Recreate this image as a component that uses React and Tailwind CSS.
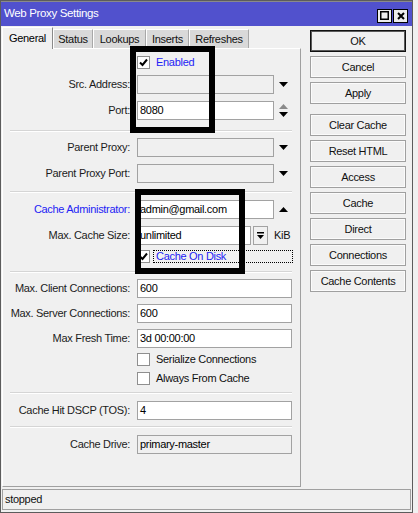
import React from "react";

const Down = () => (
  <svg width="9" height="5" viewBox="0 0 9 5"><polygon points="0,0 9,0 4.5,5" fill="#000" /></svg>
);
const Up = ({ color = "#000" }) => (
  <svg width="9" height="5" viewBox="0 0 9 5"><polygon points="0,5 9,5 4.5,0" fill={color} /></svg>
);

const Check = () => (
  <svg width="11" height="11" viewBox="0 0 11 11">
    <path d="M2 5.5 L4.5 8 L9 2.5" fill="none" stroke="#000" strokeWidth="2" />
  </svg>
);

function Box({ checked }) {
  return (
    <div className="w-[13px] h-[13px] bg-white border border-[#8f8f8f] flex items-center justify-center">
      {checked && <Check />}
    </div>
  );
}

function Field({ value = "", disabled = false, w = "w-[137px]" }) {
  return (
    <div
      className={`${w} h-[19px] border border-[#a2a2a2] flex items-center pl-[2px] text-black ${
        disabled ? "bg-[#f0f0f0]" : "bg-white"
      }`}
    >
      {value}
    </div>
  );
}

function Row({ label, blue, className = "", children }) {
  return (
    <div className={`flex items-center h-[19px] ${className}`}>
      <div className={`w-[127px] text-right whitespace-nowrap ${blue ? "text-[#2323f5]" : "text-[#1c1c1c]"}`}>
        {label}:
      </div>
      <div className="ml-[7px] flex items-center">{children}</div>
    </div>
  );
}

function Sep({ className = "" }) {
  return <div className={`ml-[7px] w-[282px] border-t border-[#d5d5d5] border-b border-b-white ${className}`} />;
}

function Arrow({ children }) {
  return <div className="w-[18px] flex flex-col items-center justify-center gap-[3px]">{children}</div>;
}

function Btn({ children, def, className = "" }) {
  return (
    <div
      className={`w-[96px] h-[22px] flex items-center justify-center bg-[#f0f0f0] text-[#111] ${
        def ? "border border-[#111] shadow-[inset_0_0_0_1px_#5a5a5a]" : "border border-[#a0a0a0] shadow-[inset_0_0_0_1px_#fbfbfb]"
      } ${className}`}
    >
      {children}
    </div>
  );
}

const tabs = ["Status", "Lookups", "Inserts", "Refreshes"];
const tabW = ["w-[40px]", "w-[53px]", "w-[43px]", "w-[60px]"];

export default function App() {
  return (
    <div className="relative w-[418px] h-[513px] bg-[#f0f0f0] overflow-hidden font-['Liberation_Sans',Arial,sans-serif] text-[11px] tracking-[-0.3px] leading-none">
      <div className="w-[413px] h-[513px] border border-[#5c5c5c] flex flex-col">
        {/* title bar */}
        <div className="h-[25px] bg-[#5151cd] flex items-center justify-between pl-[3px] pr-[4px] border-t border-[#8a8a8a]">
          <span className="text-white text-[11.5px] tracking-[-0.35px]">Web Proxy Settings</span>
          <div className="flex gap-[1px] mt-[3px]">
            <div className="w-[15px] h-[14px] bg-[#ececec] border border-black flex items-center justify-center">
              <svg width="9" height="9" viewBox="0 0 9 9">
                <rect x="0.75" y="0.75" width="7.5" height="7.5" fill="none" stroke="#000" strokeWidth="1.5" />
              </svg>
            </div>
            <div className="w-[15px] h-[14px] bg-[#ececec] border border-black flex items-center justify-center">
              <svg width="8" height="8" viewBox="0 0 8 8">
                <path d="M1 1 L7 7 M7 1 L1 7" stroke="#000" strokeWidth="2" />
              </svg>
            </div>
          </div>
        </div>

        <div className="flex-1 flex flex-col">
          <div className="flex h-[461px]">
            {/* left pane: tabs + panel */}
            <div className="ml-[1px] w-[299px] flex flex-col">
              <div className="flex h-[22px] items-end">
                <div className="w-[51px] h-[22px] bg-[#f0f0f0] border-t border-l border-white border-r border-r-[#8a8a8a] flex items-center justify-center text-black relative z-10 -mb-[1px]">
                  General
                </div>
                {tabs.map((t, i) => (
                  <div
                    key={t}
                    className={`${tabW[i]} h-[19px] bg-[#d9d9d9] border-t border-l border-white border-r border-r-[#a8a8a8] flex items-center justify-center text-[#111]`}
                  >
                    {t}
                  </div>
                ))}
              </div>
              <div className="flex-1 border-t border-l border-white border-r border-b border-r-[#a0a0a0] border-b-[#a0a0a0] flex flex-col">
                <div className="flex items-center h-[13px] mt-[7px] ml-[134px]">
                  <Box checked />
                  <span className="ml-[6px] text-[#2323f5]">Enabled</span>
                </div>
                <Row label="Src. Address" className="mt-[6px]">
                  <Field disabled />
                  <Arrow><Down /></Arrow>
                </Row>
                <Row label="Port" className="mt-[7px]">
                  <Field value="8080" />
                  <Arrow>
                    <Up color="#8a8a8a" />
                    <Down />
                  </Arrow>
                </Row>
                <Sep className="mt-[10px]" />
                <Row label="Parent Proxy" className="mt-[6px]">
                  <Field disabled />
                  <Arrow><Down /></Arrow>
                </Row>
                <Row label="Parent Proxy Port" className="mt-[7px]">
                  <Field disabled />
                  <Arrow><Down /></Arrow>
                </Row>
                <Sep className="mt-[8px]" />
                <Row label="Cache Administrator" blue className="mt-[7px]">
                  <Field value="admin@gmail.com" />
                  <Arrow><Up /></Arrow>
                </Row>
                <Row label="Max. Cache Size" className="mt-[7px]">
                  <Field value="unlimited" w="w-[114px]" />
                  <div className="ml-[2px] w-[15px] h-[19px] border border-[#a2a2a2] bg-[#f0f0f0] flex items-center justify-center">
                    <svg width="9" height="9" viewBox="0 0 9 9">
                      <rect x="1" y="1" width="7" height="1.5" fill="#000" />
                      <polygon points="1,4 8,4 4.5,8" fill="#000" />
                    </svg>
                  </div>
                  <span className="ml-[6px] text-[#111]">KiB</span>
                </Row>
                <div className="flex items-center h-[13px] mt-[5px] ml-[134px]">
                  <Box checked />
                  <span className="ml-[3px] w-[140px] h-[13px] border border-dotted border-black flex items-center pl-[2px] text-[#2323f5]">
                    Cache On Disk
                  </span>
                </div>
                <Sep className="mt-[8px]" />
                <Row label="Max. Client Connections" className="mt-[6px]">
                  <Field value="600" w="w-[155px]" />
                </Row>
                <Row label="Max. Server Connections" className="mt-[6px]">
                  <Field value="600" w="w-[155px]" />
                </Row>
                <Row label="Max Fresh Time" className="mt-[6px]">
                  <Field value="3d 00:00:00" w="w-[155px]" />
                </Row>
                <div className="flex items-center h-[13px] mt-[5px] ml-[134px]">
                  <Box />
                  <span className="ml-[6px] text-[#111]">Serialize Connections</span>
                </div>
                <div className="flex items-center h-[13px] mt-[6px] ml-[134px]">
                  <Box />
                  <span className="ml-[6px] text-[#111]">Always From Cache</span>
                </div>
                <Sep className="mt-[7px]" />
                <Row label="Cache Hit DSCP (TOS)" className="mt-[7px]">
                  <Field value="4" w="w-[155px]" />
                </Row>
                <Sep className="mt-[6px]" />
                <Row label="Cache Drive" className="mt-[7px]">
                  <Field value="primary-master" disabled w="w-[155px]" />
                </Row>
              </div>
            </div>

            {/* action buttons */}
            <div className="ml-[9px] mt-[4px] flex flex-col gap-[4px]">
              <Btn def>OK</Btn>
              <Btn>Cancel</Btn>
              <Btn>Apply</Btn>
              <Btn className="mt-[6px]">Clear Cache</Btn>
              <Btn>Reset HTML</Btn>
              <Btn>Access</Btn>
              <Btn>Cache</Btn>
              <Btn>Direct</Btn>
              <Btn>Connections</Btn>
              <Btn>Cache Contents</Btn>
            </div>
          </div>

          {/* status bar */}
          <div className="mt-[2px] mx-[1px] h-[21px] border border-[#a0a0a0] flex items-center pl-[2px] text-[#111]">
            stopped
          </div>
        </div>
      </div>

      {/* highlight frames drawn over the form */}
      <div className="absolute left-[130px] top-[46px] w-[85px] h-[87px] border-[6px] border-black pointer-events-none" />
      <div className="absolute left-[135px] top-[189px] w-[110px] h-[85px] border-[6px] border-black pointer-events-none" />
    </div>
  );
}
